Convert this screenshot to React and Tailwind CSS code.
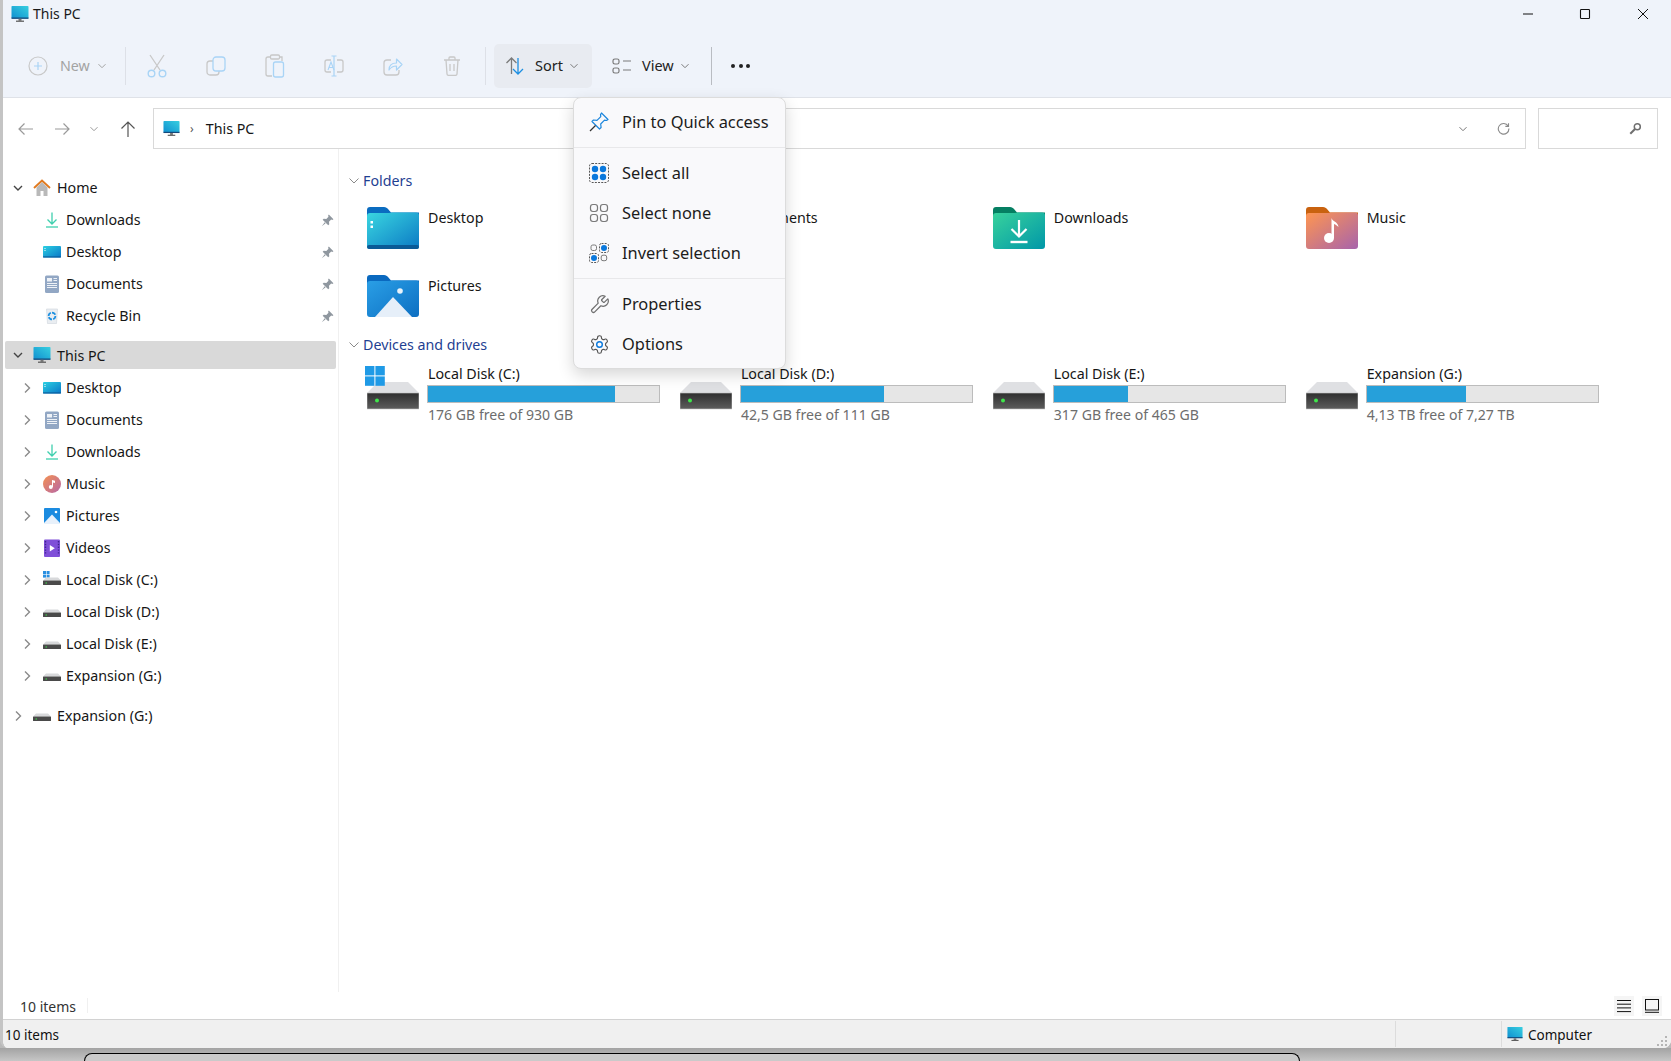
import React from "react";

const G = "#c8c8c8", B = "#a9d4f6";

function Pc({ s = 18, id = "pc" }) {
  return (
    <svg width={s} height={s} viewBox="0 0 18 18" className="shrink-0">
      <defs><linearGradient id={id} x1="0" y1="1" x2="1" y2="0"><stop offset="0" stopColor="#0f8fd0" /><stop offset="1" stopColor="#38cfe0" /></linearGradient></defs>
      <rect x="0.5" y="1" width="17" height="12.5" rx="0.8" fill={`url(#${id})`} />
      <rect x="0.5" y="12.5" width="17" height="1.3" fill="#15487a" />
      <rect x="7.5" y="13.8" width="3" height="2" fill="#777" />
      <rect x="5" y="15.6" width="8" height="1.2" fill="#555" />
    </svg>
  );
}
function DeskSmall() {
  return (
    <svg width="18" height="18" viewBox="0 0 18 18" className="shrink-0">
      <defs><linearGradient id="ds" x1="0" y1="0" x2="1" y2="1"><stop offset="0" stopColor="#2bd0e2" /><stop offset="1" stopColor="#0a77c8" /></linearGradient></defs>
      <rect x="0" y="3" width="18" height="11.5" rx="1" fill="url(#ds)" />
      <rect x="0" y="13.4" width="18" height="1.1" fill="#0b5a9a" />
      <rect x="1.5" y="5" width="1" height="1" fill="#fff" /><rect x="1.5" y="7" width="1" height="1" fill="#fff" />
    </svg>
  );
}
function DlSmall() {
  return (
    <svg width="18" height="18" viewBox="0 0 18 18" fill="none" stroke="#3fcfae" strokeWidth="1.3" className="shrink-0">
      <path d="M9 1.5v11M4.5 8.5 9 13l4.5-4.5" /><path d="M3 16h12" />
    </svg>
  );
}
function DocSmall() {
  return (
    <svg width="18" height="18" viewBox="0 0 18 18" className="shrink-0">
      <rect x="2" y="0.5" width="14" height="17.5" rx="1.5" fill="#92a7c4" />
      <rect x="4" y="3" width="5" height="3.5" fill="#eef2f7" />
      <path d="M10.5 3.5H14M10.5 5.5H14M4 8.5H14M4 10.5H14M4 12.5H14" stroke="#eef2f7" strokeWidth="1" />
    </svg>
  );
}
function BinSmall() {
  return (
    <svg width="18" height="18" viewBox="0 0 18 18" className="shrink-0">
      <path d="M3.5 2h11l-1 14.5h-9z" fill="#e9edf1" stroke="#cfd5db" strokeWidth="0.6" />
      <circle cx="9" cy="9" r="3.4" fill="none" stroke="#1c8fe0" strokeWidth="1.7" strokeDasharray="4 1.2" />
    </svg>
  );
}
function MusicSmall() {
  return (
    <svg width="18" height="18" viewBox="0 0 18 18" className="shrink-0">
      <defs><linearGradient id="ms" x1="0" y1="0" x2="1" y2="1"><stop offset="0" stopColor="#f59150" /><stop offset="1" stopColor="#b667a8" /></linearGradient></defs>
      <circle cx="9" cy="9" r="9" fill="url(#ms)" />
      <circle cx="7.8" cy="12" r="2" fill="#fff" />
      <path d="M9 12V5l3 .8V8L10 7.5V12z" fill="#fff" />
    </svg>
  );
}
function PicSmall() {
  return (
    <svg width="18" height="18" viewBox="0 0 18 18" className="shrink-0">
      <rect x="1" y="1" width="16" height="16" rx="1" fill="#1b8be0" />
      <path d="M1 16 9 7.5 17 16v1H1z" fill="#e8f1fb" />
      <circle cx="13" cy="5" r="1.3" fill="#fff" />
    </svg>
  );
}
function VidSmall() {
  return (
    <svg width="18" height="18" viewBox="0 0 18 18" className="shrink-0">
      <rect x="1" y="0.5" width="16" height="17.5" rx="1" fill="#7f4fd8" />
      <path d="M2.5 2v14M15.5 2v14" stroke="#3f2490" strokeWidth="1.4" strokeDasharray="1.4 1.4" />
      <path d="M6.8 6v6.5l5-3.2z" fill="#fff" />
    </svg>
  );
}
function DiskSmall({ win }) {
  return (
    <svg width="18" height="18" viewBox="0 0 18 18" className="shrink-0">
      {win && <g fill="#2a8fe0"><rect x="0" y="0" width="3" height="3" /><rect x="3.6" y="0" width="3" height="3" /><rect x="0" y="3.6" width="3" height="3" /><rect x="3.6" y="3.6" width="3" height="3" /></g>}
      <path d="M3 6.5h12l3 3H0z" fill="#d8d9db" />
      <rect x="0" y="9.5" width="18" height="4.5" rx="0.5" fill="#4a4a4a" />
      <rect x="2.5" y="11.5" width="1.5" height="1" fill="#3ee04a" />
    </svg>
  );
}
function HomeIcon() {
  return (
    <svg width="18" height="18" viewBox="0 0 18 18" className="shrink-0">
      <path d="M3.5 8.5V17h4v-5h3v5h4V8.5L9 3z" fill="#b9b9b9" />
      <path d="M1 9 9 1.5 17 9" fill="none" stroke="#e17a1f" strokeWidth="1.9" />
    </svg>
  );
}
function PinSmall() {
  return (
    <svg width="13" height="13" viewBox="0 0 14 14" className="shrink-0" fill="#8f979f">
      <path d="M8.4.6 13.4 5.6 12.2 6.4 11 5.9 8.6 8.3 8.9 11.1 7.8 12.2 1.8 6.2 2.9 5.1 5.7 5.4 8.1 3 7.6 1.8z" />
      <path d="M4 9 .8 13.2 5 10z" />
    </svg>
  );
}
function Chev({ open, dark }) {
  const c = dark || open ? "#444" : "#8a8a8a";
  return (
    <svg width="16" height="16" viewBox="0 0 16 16" fill="none" stroke={c} strokeWidth="1.4" className="shrink-0">
      {open ? <path d="M4 6l4 4 4-4" /> : <path d="M6 3.5 10.5 8 6 12.5" />}
    </svg>
  );
}
function SmallChev({ c = "#7a7a7a", s = 10 }) {
  return (
    <svg width={s} height={s} viewBox="0 0 10 10" fill="none" stroke={c} strokeWidth="1" className="shrink-0">
      <path d="M1.5 3.2 5 6.7l3.5-3.5" />
    </svg>
  );
}

function FolderBig({ from, to, tab, id, children }) {
  return (
    <svg width="52" height="42" viewBox="0 0 52 42" className="shrink-0">
      <defs><linearGradient id={id} x1="0" y1="0" x2="1" y2="1"><stop offset="0" stopColor={from} /><stop offset="1" stopColor={to} /></linearGradient></defs>
      <path d="M0 3a3 3 0 0 1 3-3h14c2 0 3 1 4 2l3 3.5h28V12H0z" fill={tab} />
      <path d="M0 9c0-2 1-3 3-3h19l3-.6H49c2 0 3 1 3 3V39a3 3 0 0 1-3 3H3a3 3 0 0 1-3-3z" fill={`url(#${id})`} />
      {children}
    </svg>
  );
}
const DesktopF = () => (
  <FolderBig id="f1" from="#3ad6e0" to="#0b79c4" tab="#0a6cc0">
    <rect x="3.5" y="14" width="2.5" height="2.5" fill="#fff" /><rect x="3.5" y="18.5" width="2.5" height="2.5" fill="#fff" />
    <rect x="0" y="38" width="52" height="4" rx="2" fill="#0a5a96" />
  </FolderBig>
);
const DocsF = () => (
  <FolderBig id="f5" from="#7fb0e8" to="#2f6fc0" tab="#2a5fb0" />
);
const DownF = () => (
  <FolderBig id="f2" from="#38d29c" to="#0097a8" tab="#057f62">
    <path d="M26 13v16M18.5 22l7.5 7.5 7.5-7.5" fill="none" stroke="#fff" strokeWidth="2.2" /><path d="M17.5 35h17" stroke="#fff" strokeWidth="2.4" />
  </FolderBig>
);
const MusicF = () => (
  <FolderBig id="f3" from="#ff9650" to="#a763ac" tab="#c9620f">
    <circle cx="23" cy="31" r="5" fill="#fff" />
    <path d="M25.5 31V11c1 4 6 3 7 9-2-2-4-3-4.5-3V31z" fill="#fff" />
  </FolderBig>
);
const PicF = () => (
  <FolderBig id="f4" from="#2a9fe6" to="#0d6fc2" tab="#0a69bf">
    <circle cx="33" cy="16" r="2.8" fill="#e9f3fb" />
    <path d="M8 42 26 22l19 20z" fill="#e6eff9" />
  </FolderBig>
);
const VidF = () => (
  <FolderBig id="f6" from="#9a6fe6" to="#5b36c0" tab="#4d2aa8" />
);

function DriveBig({ id }) {
  return (
    <svg width="52" height="28" viewBox="0 0 52 28" className="shrink-0">
      <defs><linearGradient id={id} x1="0" y1="0" x2="0" y2="1"><stop offset="0" stopColor="#2f2f2f" /><stop offset="1" stopColor="#5d5d5d" /></linearGradient></defs>
      <path d="M11 0h30l11 11H0z" fill="#dfe0e3" />
      <rect x="0" y="11" width="52" height="16" fill={`url(#${id})`} stroke="#c8c8c8" strokeWidth="0.6" />
      <circle cx="10" cy="18.5" r="2" fill="#3fe64b" />
    </svg>
  );
}

function TreeRow({ icon, label, chev, top, pin, cls = "" }) {
  return (
    <div className={`flex h-8 items-center ${top ? "pl-[7px]" : "pl-[16px]"} ${cls}`}>
      <span className="flex w-4 justify-center">{chev === "open" ? <Chev open /> : chev === "right" ? <Chev /> : null}</span>
      <span className={top ? "ml-[7px] mr-[6px]" : "ml-2 mr-[5px]"}>{icon}</span>
      <span className="text-[14.25px] leading-5 text-[#161616]">{label}</span>
      {pin && <span className="ml-auto mr-[4px]"><PinSmall /></span>}
    </div>
  );
}

function Folder({ icon, label }) {
  return (
    <div className="flex h-[42px] items-start gap-[9px]">
      {icon}
      <span className="mt-[1px] text-[14.25px] leading-5 text-[#161616]">{label}</span>
    </div>
  );
}

function Drive({ id, title, sub, pct, win }) {
  return (
    <div className="flex items-start gap-2">
      <div className="relative h-[60px] w-[52px] shrink-0">
        <div className="pt-[19px]"><DriveBig id={id} /></div>
        {win && (
          <svg width="20" height="20" viewBox="0 0 20 20" className="absolute left-[-2px] top-[3px]">
            <g fill="#1f9ae6"><rect x="0" y="0" width="9.4" height="9.4" /><rect x="10.4" y="0" width="9.4" height="9.4" /><rect x="0" y="10.4" width="9.4" height="9.4" /><rect x="10.4" y="10.4" width="9.4" height="9.4" /></g>
          </svg>
        )}
      </div>
      <div className="w-[233px]">
        <div className="pl-[1px] pt-[1px] text-[14.25px] leading-5 text-[#161616]">{title}</div>
        <div className="mt-[1px] h-[18px] border border-[#bcbcbc] bg-[#e6e6e6]">
          <div className="h-full bg-[#26a0da]" style={{ width: `${pct}%` }} />
        </div>
        <div className="mt-[2px] pl-[1px] text-[14.1px] leading-5 text-[#6d6d6d]">{sub}</div>
      </div>
    </div>
  );
}

function Slot({ children }) {
  return <div className="flex h-[44px] w-[59px] items-center justify-center">{children}</div>;
}

function MenuRow({ icon, label, cls = "h-10" }) {
  return (
    <div className={`flex ${cls} items-center pl-[14px]`}>
      <span className="flex w-[22px] justify-center">{icon}</span>
      <span className="ml-3 text-[16.4px] leading-6 text-[#1c1c1c]">{label}</span>
    </div>
  );
}

const dash = { fill: "none", stroke: "#444", strokeWidth: 0.9, strokeDasharray: "2 1.2" };

export default function App() {
  return (
    <div className="flex h-[1061px] w-[1671px] flex-col overflow-hidden bg-[#b9b9b9] font-['Noto_Sans',sans-serif]">
      <div className="relative flex h-[1048px] shrink-0 flex-col overflow-hidden rounded-b-lg border-l-[3px] border-[#c4c4c4] bg-white">
        {/* header */}
        <div className="h-[98px] shrink-0 border-b border-[#dfe2e8] bg-[#eff3fa]">
          <div className="flex h-[27px] items-center pl-2">
            <Pc s={18} id="pc1" />
            <span className="ml-1 text-[14px] text-[#1a1a1a]">This PC</span>
            <div className="ml-auto flex items-center">
              <span className="flex w-[56px] justify-center"><svg width="12" height="12" viewBox="0 0 12 12" stroke="#111" strokeWidth="1"><path d="M1 6h10" /></svg></span>
              <span className="mr-2 flex w-[58px] justify-center"><svg width="12" height="12" viewBox="0 0 12 12" fill="none" stroke="#111" strokeWidth="1.1"><rect x="1.5" y="1.5" width="9" height="9" rx="0.8" /></svg></span>
              <span className="mr-[7px] flex w-[42px] justify-center"><svg width="12" height="12" viewBox="0 0 12 12" fill="none" stroke="#111" strokeWidth="1"><path d="M1 1l10 10M11 1 1 11" /></svg></span>
            </div>
          </div>
          <div className="mt-[17px] flex h-[44px] items-center pl-[25px]">
            <div className="flex w-[97px] items-center">
              <svg width="20" height="20" viewBox="0 0 20 20" fill="none" className="shrink-0"><circle cx="10" cy="10" r="9" stroke={G} strokeWidth="1.2" /><path d="M10 6v8M6 10h8" stroke={B} strokeWidth="1.2" /></svg>
              <span className="ml-3 text-[14.25px] text-[#a3a3a3]">New</span>
              <span className="ml-[7px]"><SmallChev c="#a3a3a3" /></span>
            </div>
            <div className="h-[38px] w-px bg-[#dde0e7]" />
            <div className="ml-[1px] flex">
              <Slot><svg width="22" height="24" viewBox="0 0 22 24" fill="none"><path d="M4 1l10 15M18 1 8 16" stroke={G} strokeWidth="1.3" /><circle cx="5.5" cy="19.5" r="3.3" stroke={B} strokeWidth="1.4" /><circle cx="16.5" cy="19.5" r="3.3" stroke={B} strokeWidth="1.4" /></svg></Slot>
              <Slot><svg width="20" height="20" viewBox="0 0 20 20" fill="none"><rect x="1" y="5" width="12" height="14" rx="3" stroke={G} strokeWidth="1.3" /><rect x="7" y="1" width="12" height="14" rx="3" fill="#eff3fa" stroke={B} strokeWidth="1.3" /></svg></Slot>
              <Slot><svg width="20" height="24" viewBox="0 0 20 24" fill="none"><path d="M6 3H3a2 2 0 0 0-2 2v15a2 2 0 0 0 2 2h4M14 3h3v4" stroke={G} strokeWidth="1.3" /><rect x="5.5" y="1" width="9" height="4" rx="1.2" stroke={G} strokeWidth="1.3" /><rect x="8.5" y="8" width="10" height="15" rx="2" stroke={B} strokeWidth="1.3" /></svg></Slot>
              <Slot><svg width="20" height="22" viewBox="0 0 20 22" fill="none"><path d="M7 5H3a2 2 0 0 0-2 2v8a2 2 0 0 0 2 2h4M13 5h4a2 2 0 0 1 2 2v8a2 2 0 0 1-2 2h-4" stroke={G} strokeWidth="1.3" /><path d="M10 1v20M7.5 1h5M7.5 21h5" stroke={B} strokeWidth="1.2" /><path d="M4 15l3-8 3 8M5 12.5h4" stroke={B} strokeWidth="1.1" /></svg></Slot>
              <Slot><svg width="20" height="20" viewBox="0 0 20 20" fill="none"><path d="M8 4H4a3 3 0 0 0-3 3v9a3 3 0 0 0 3 3h9a3 3 0 0 0 3-3v-2" stroke={G} strokeWidth="1.3" /><path d="M6 14c0-5 3-7 7.5-7V3L19 8.5 13.5 14v-4C10 10 8 11 6 14z" stroke={B} strokeWidth="1.2" strokeLinejoin="round" /></svg></Slot>
              <Slot><svg width="18" height="20" viewBox="0 0 18 20" fill="none" stroke={G} strokeWidth="1.3"><path d="M1 4h16M6 4V2a1 1 0 0 1 1-1h4a1 1 0 0 1 1 1v2M3 4l1 14a1.5 1.5 0 0 0 1.5 1.4h7A1.5 1.5 0 0 0 14 18l1-14M7 8v7M11 8v7" /></svg></Slot>
            </div>
            <div className="ml-[4px] h-[38px] w-px bg-[#dde0e7]" />
            <div className="ml-2 flex h-[44px] w-[98px] items-center rounded-[5px] bg-[#e8ebf1] pl-[11px]">
              <svg width="20" height="20" viewBox="0 0 20 20" fill="none" className="shrink-0"><path d="M6.5 18V2M1.5 7l5-5 5 5" stroke="#7b7b7b" strokeWidth="1.3" /><path d="M13 2v16M8 13l5 5 5-5" stroke="#1c8fe2" strokeWidth="1.3" /></svg>
              <span className="ml-[10px] text-[14.5px] text-[#222]">Sort</span>
              <span className="ml-[6px]"><SmallChev /></span>
            </div>
            <div className="ml-5 flex w-[99px] items-center">
              <svg width="20" height="16" viewBox="0 0 20 16" fill="none" stroke="#7a7a7a" strokeWidth="1.2" className="shrink-0"><rect x="1" y="1" width="6" height="5" rx="1.8" /><rect x="1" y="10" width="6" height="5" rx="1.8" /><path d="M11 3h8M11 12h8" /></svg>
              <span className="ml-[10px] text-[14.5px] text-[#222]">View</span>
              <span className="ml-[6px]"><SmallChev /></span>
            </div>
            <div className="h-[38px] w-px bg-[#b9bcc2]" />
            <div className="ml-[19px] flex gap-[3.5px]">
              <span className="size-1 rounded-full bg-[#222]" /><span className="size-1 rounded-full bg-[#222]" /><span className="size-1 rounded-full bg-[#222]" />
            </div>
          </div>
        </div>

        {/* address row */}
        <div className="flex h-[51px] shrink-0 items-start pt-[10px]">
          <div className="flex h-[41px] items-center pl-[14px] text-[#9a9a9a]">
            <svg width="18" height="14" viewBox="0 0 18 14" fill="none" stroke="#9a9a9a" strokeWidth="1.2"><path d="M16 7H2M7.5 1.5 2 7l5.5 5.5" /></svg>
            <svg width="18" height="14" viewBox="0 0 18 14" fill="none" stroke="#9a9a9a" strokeWidth="1.2" className="ml-[18px]"><path d="M2 7h14M10.5 1.5 16 7l-5.5 5.5" /></svg>
            <span className="ml-[18px]"><SmallChev c="#9a9a9a" /></span>
            <svg width="18" height="18" viewBox="0 0 18 18" fill="none" stroke="#555" strokeWidth="1.2" className="ml-[20px]"><path d="M9 17V2M2.5 8.5 9 2l6.5 6.5" /></svg>
          </div>
          <div className="ml-4 flex h-[41px] w-[1373px] items-center border border-[#d9d9d9] pl-[9px]">
            <Pc s={17} id="pc2" />
            <span className="ml-[10px] text-[12px] text-[#555]">›</span>
            <span className="ml-3 text-[14.25px] text-[#161616]">This PC</span>
            <span className="ml-auto mr-[29px]"><SmallChev c="#777" /></span>
            <svg width="13" height="13" viewBox="0 0 14 14" fill="none" stroke="#8b8b8b" strokeWidth="1.2" className="mr-[15px]"><path d="M12 4.4A5.7 5.7 0 1 0 12.8 7M12.4 1.3v3.4H9" /></svg>
          </div>
          <div className="ml-[12px] flex h-[41px] w-[120px] items-center justify-end border border-[#d9d9d9] pr-[15px]">
            <svg width="13" height="13" viewBox="0 0 13 13" fill="none" stroke="#6f6f6f"><circle cx="8.3" cy="4.7" r="3" strokeWidth="1.5" /><path d="M6 7 1.3 11.7" strokeWidth="2" /></svg>
          </div>
        </div>

        {/* main */}
        <div className="flex min-h-0 flex-1">
          <aside className="w-[336px] shrink-0 border-r border-[#f0f0f0] pt-[23px]">
            <TreeRow top chev="open" icon={<HomeIcon />} label="Home" />
            <TreeRow icon={<DlSmall />} label="Downloads" pin />
            <TreeRow icon={<DeskSmall />} label="Desktop" pin />
            <TreeRow icon={<DocSmall />} label="Documents" pin />
            <TreeRow icon={<BinSmall />} label="Recycle Bin" pin />
            <div className="mx-[2px] mb-[3px] mt-[9px] flex h-[28px] items-center rounded-[2px] bg-[#d9d9d9] pl-[5px]">
              <span className="flex w-4 justify-center"><Chev open /></span>
              <span className="ml-[7px] mr-[6px]"><Pc s={18} id="pc3" /></span>
              <span className="pt-[1px] text-[14.25px] leading-5 text-[#161616]">This PC</span>
            </div>
            <TreeRow chev="right" icon={<DeskSmall />} label="Desktop" />
            <TreeRow chev="right" icon={<DocSmall />} label="Documents" />
            <TreeRow chev="right" icon={<DlSmall />} label="Downloads" />
            <TreeRow chev="right" icon={<MusicSmall />} label="Music" />
            <TreeRow chev="right" icon={<PicSmall />} label="Pictures" />
            <TreeRow chev="right" icon={<VidSmall />} label="Videos" />
            <TreeRow chev="right" icon={<DiskSmall win />} label="Local Disk (C:)" />
            <TreeRow chev="right" icon={<DiskSmall />} label="Local Disk (D:)" />
            <TreeRow chev="right" icon={<DiskSmall />} label="Local Disk (E:)" />
            <TreeRow chev="right" icon={<DiskSmall />} label="Expansion (G:)" />
            <TreeRow top chev="right" icon={<DiskSmall />} label="Expansion (G:)" cls="mt-2" />
          </aside>
          <main className="min-w-0 flex-1 pt-[22px]">
            <div className="flex h-5 items-center pl-[9px]">
              <svg width="12" height="12" viewBox="0 0 12 12" fill="none" stroke="#8a8a8a"><path d="M1.5 3.5 6 8l4.5-4.5" /></svg>
              <span className="ml-[3px] text-[14.25px] text-[#1f3f92]">Folders</span>
            </div>
            <div className="mt-4 grid grid-cols-[repeat(4,312.9px)] gap-y-[26px] pl-[28px]">
              <Folder icon={<DesktopF />} label="Desktop" />
              <Folder icon={<DocsF />} label="Documents" />
              <Folder icon={<DownF />} label="Downloads" />
              <Folder icon={<MusicF />} label="Music" />
              <Folder icon={<PicF />} label="Pictures" />
              <Folder icon={<VidF />} label="Videos" />
            </div>
            <div className="mt-[18px] flex h-5 items-center pl-[9px]">
              <svg width="12" height="12" viewBox="0 0 12 12" fill="none" stroke="#8a8a8a"><path d="M1.5 3.5 6 8l4.5-4.5" /></svg>
              <span className="ml-[3px] text-[14.25px] text-[#1f3f92]">Devices and drives</span>
            </div>
            <div className="mt-2 grid grid-cols-[repeat(4,312.9px)] pl-[28px]">
              <Drive id="d1" win title="Local Disk (C:)" sub="176 GB free of 930 GB" pct={81} />
              <Drive id="d2" title="Local Disk (D:)" sub="42,5 GB free of 111 GB" pct={62} />
              <Drive id="d3" title="Local Disk (E:)" sub="317 GB free of 465 GB" pct={32} />
              <Drive id="d4" title="Expansion (G:)" sub="4,13 TB free of 7,27 TB" pct={43} />
            </div>
          </main>
        </div>

        {/* white status */}
        <div className="flex h-[28px] shrink-0 items-center border-b border-[#d2d2d2] pl-[17px]">
          <span className="pt-[2px] text-[14px] text-[#333]">10 items</span>
          <span className="ml-[11px] h-[15px] w-px bg-[#f0f0f0]" />
          <div className="ml-auto mr-[9px] flex gap-2">
            <span className="flex size-5 items-center justify-center bg-[#f5f5f5]"><svg width="14" height="14" viewBox="0 0 14 14" stroke="#111"><path d="M0 1.5h14M0 5.2h14M0 8.9h14M0 12.6h14" /></svg></span>
            <span className="flex size-5 items-center justify-center bg-[#f5f5f5]"><svg width="14" height="14" viewBox="0 0 14 14" fill="none" stroke="#111"><rect x="0.5" y="0.5" width="13" height="10.5" /><path d="M0 13.3h14" /></svg></span>
          </div>
        </div>
        {/* gray status */}
        <div className="flex h-[28px] shrink-0 items-center bg-[#f0f0f0] pl-[2px] pr-[2px]">
          <span className="pt-[2px] text-[13.5px] text-[#111]">10 items</span>
          <span className="ml-auto h-[26px] w-px bg-[#dcdcdc]" />
          <span className="ml-[105px] h-[26px] w-px bg-[#dcdcdc]" />
          <span className="ml-[5px]"><Pc s={16} id="pc4" /></span>
          <span className="ml-[5px] pt-[2px] text-[13.5px] text-[#111]">Computer</span>
          <svg width="12" height="12" viewBox="0 0 12 12" fill="#b5b5b5" className="ml-[65px] self-end"><rect x="8" y="0" width="2" height="2" /><rect x="4" y="4" width="2" height="2" /><rect x="8" y="4" width="2" height="2" /><rect x="0" y="8" width="2" height="2" /><rect x="4" y="8" width="2" height="2" /><rect x="8" y="8" width="2" height="2" /></svg>
        </div>
      </div>

      {/* behind window */}
      <div className="flex-1 bg-gradient-to-b from-[#a3a3a3] to-[#c6c6c6] pt-[5px]">
        <div className="ml-[84px] h-full w-[1216px] rounded-t-lg border-x border-t border-black bg-[#cacaca]" />
      </div>

      {/* context menu */}
      <div className="absolute left-[573px] top-[97px] h-[272px] w-[213px] rounded-lg border border-[#dcdcdc] bg-[#f9f9fb] shadow-[0_6px_16px_rgba(0,0,0,0.16)]">
        <MenuRow cls="h-[49px] pb-[2px]" label="Pin to Quick access" icon={
          <svg width="20" height="20" viewBox="0 0 20 20" fill="none" stroke="#1c86dc" strokeWidth="1.2" strokeLinejoin="round"><path d="M12.5 1 19 7.5l-1.5 1-2-.3-3.8 3.8.4 3.5L10.5 17 3 9.5 4.5 8l3.5.4L11.8 4.6l-.3-2z" /><path d="M6.5 13.5 1 19" stroke="#333" /></svg>
        } />
        <div className="h-px bg-[#e8e8ea]" />
        <div className="py-[5px]">
          <MenuRow label="Select all" icon={
            <svg width="20" height="20" viewBox="0 0 20 20" fill="none"><rect x="0.5" y="0.5" width="19" height="19" rx="2.5" {...dash} /><circle cx="6" cy="6" r="3.2" fill="#0a78dc" /><circle cx="14" cy="6" r="3.2" fill="#0a78dc" /><circle cx="6" cy="14" r="3.2" fill="#0a78dc" /><circle cx="14" cy="14" r="3.2" fill="#0a78dc" /></svg>
          } />
          <MenuRow label="Select none" icon={
            <svg width="20" height="20" viewBox="0 0 20 20" fill="none" stroke="#7a7a7a" strokeWidth="1.2"><rect x="1.5" y="1.5" width="7" height="7" rx="2.4" /><rect x="11.5" y="1.5" width="7" height="7" rx="2.4" /><rect x="1.5" y="11.5" width="7" height="7" rx="2.4" /><rect x="11.5" y="11.5" width="7" height="7" rx="2.4" /></svg>
          } />
          <MenuRow label="Invert selection" icon={
            <svg width="20" height="20" viewBox="0 0 20 20" fill="none"><rect x="10.5" y="0.5" width="9" height="9" rx="2" {...dash} /><rect x="0.5" y="10.5" width="9" height="9" rx="2" {...dash} /><circle cx="15" cy="5" r="3" fill="#0a78dc" /><circle cx="5" cy="15" r="3" fill="#0a78dc" /><rect x="2" y="2" width="5.5" height="5.5" rx="1.8" stroke="#7a7a7a" /><rect x="12.2" y="12.2" width="5.5" height="5.5" rx="1.8" stroke="#7a7a7a" /></svg>
          } />
        </div>
        <div className="h-px bg-[#e8e8ea]" />
        <div className="py-[5px]">
          <MenuRow label="Properties" icon={
            <svg width="21" height="21" viewBox="0 0 24 24" fill="none" stroke="#6f6f6f" strokeWidth="1.4" strokeLinejoin="round"><path d="M14.7 6.3a1 1 0 0 0 0 1.4l1.6 1.6a1 1 0 0 0 1.4 0l3.77-3.77a6 6 0 0 1-7.94 7.94l-6.91 6.91a2.12 2.12 0 0 1-3-3l6.91-6.91a6 6 0 0 1 7.94-7.94l-3.76 3.76z" /></svg>
          } />
          <MenuRow label="Options" icon={
            <svg width="21" height="21" viewBox="0 0 24 24" fill="none" stroke="#555" strokeWidth="1.3"><path d="M12.22 2h-.44a2 2 0 0 0-2 2v.18a2 2 0 0 1-1 1.73l-.43.25a2 2 0 0 1-2 0l-.15-.08a2 2 0 0 0-2.73.73l-.22.38a2 2 0 0 0 .73 2.73l.15.1a2 2 0 0 1 1 1.72v.51a2 2 0 0 1-1 1.74l-.15.09a2 2 0 0 0-.73 2.73l.22.38a2 2 0 0 0 2.73.73l.15-.08a2 2 0 0 1 2 0l.43.25a2 2 0 0 1 1 1.73V20a2 2 0 0 0 2 2h.44a2 2 0 0 0 2-2v-.18a2 2 0 0 1 1-1.73l.43-.25a2 2 0 0 1 2 0l.15.08a2 2 0 0 0 2.73-.73l.22-.39a2 2 0 0 0-.73-2.73l-.15-.08a2 2 0 0 1-1-1.74v-.5a2 2 0 0 1 1-1.74l.15-.09a2 2 0 0 0 .73-2.73l-.22-.38a2 2 0 0 0-2.73-.73l-.15.08a2 2 0 0 1-2 0l-.43-.25a2 2 0 0 1-1-1.73V4a2 2 0 0 0-2-2z" /><circle cx="12" cy="12" r="3.2" stroke="#0a78dc" strokeWidth="1.6" /></svg>
          } />
        </div>
      </div>
    </div>
  );
}
